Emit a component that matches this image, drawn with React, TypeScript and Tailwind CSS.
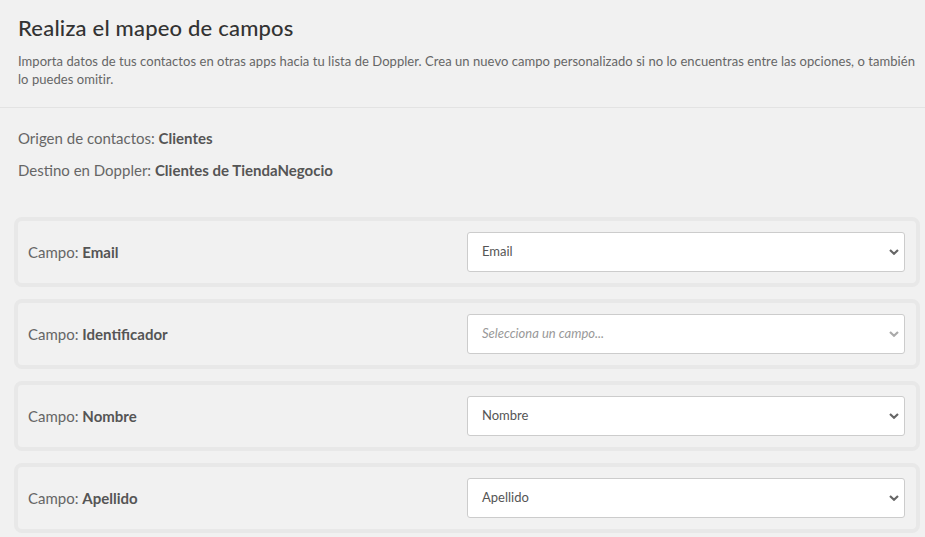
import React from 'react';

type Field = {
  name: string;
  value: string;
};

const fields: Field[] = [
  { name: 'Email', value: 'Email' },
  { name: 'Identificador', value: '' },
  { name: 'Nombre', value: 'Nombre' },
  { name: 'Apellido', value: 'Apellido' },
];

const Chevron: React.FC<{ light?: boolean }> = ({ light }) => (
  <svg
    width="10"
    height="7"
    viewBox="0 0 10 7"
    className={`pointer-events-none absolute right-[5px] top-1/2 -translate-y-1/2 ${light ? 'text-[#aaa]' : 'text-[#666]'}`}
  >
    <path d="M1 1.5 L5 5.2 L9 1.5" fill="none" stroke="currentColor" strokeWidth="2.2" />
  </svg>
);

const App: React.FC = () => {
  return (
    <div className="min-h-screen bg-[#f1f1f1] font-['Lato','Liberation_Sans',sans-serif] text-[#666]">
      <header className="border-b border-[#e3e3e3] pl-[18px] pr-[8px] pt-[14px] pb-[19px]">
        <h1 className="text-[22px] font-medium leading-[28px] tracking-[0.2px] text-[#333]">Realiza el mapeo de campos</h1>
        <p className="mt-[10px] text-[13px] leading-[18px] tracking-[0.05px] text-[#666]">
          Importa datos de tus contactos en otras apps hacia tu lista de Doppler. Crea un nuevo campo personalizado si no lo encuentras entre las opciones, o también lo puedes omitir.
        </p>
      </header>

      <section className="px-[18px] pt-[20px] text-[15px] leading-[20px]">
        <p>
          Origen de contactos: <strong className="font-bold text-[#555]">Clientes</strong>
        </p>
        <p className="mt-[12px]">
          Destino en Doppler: <strong className="font-bold text-[#555]">Clientes de TiendaNegocio</strong>
        </p>
      </section>

      <div className="flex flex-col gap-[12px] pl-[14px] pr-[5px] pt-[37px]">
        {fields.map((f) => (
          <div key={f.name} className="rounded-[8px] border-4 border-[#e8e8e8] bg-[#f1f1f1]">
            <div className="grid grid-cols-2 items-center py-[11px]">
              <div className="pl-[10px] text-[15px]">
                Campo: <strong className="font-bold text-[#555]">{f.name}</strong>
              </div>
              <div className="relative mr-[11px]">
                <div className="relative flex h-[40px] items-center rounded-[3px] border border-[#ccc] bg-white pl-[14px] text-[13px]">
                  {f.value ? (
                    <span className="text-[#555]">{f.value}</span>
                  ) : (
                    <span className="italic text-[#999]">Selecciona un campo...</span>
                  )}
                  <Chevron light={!f.value} />
                </div>
              </div>
            </div>
          </div>
        ))}
      </div>
    </div>
  );
};

export default App;
